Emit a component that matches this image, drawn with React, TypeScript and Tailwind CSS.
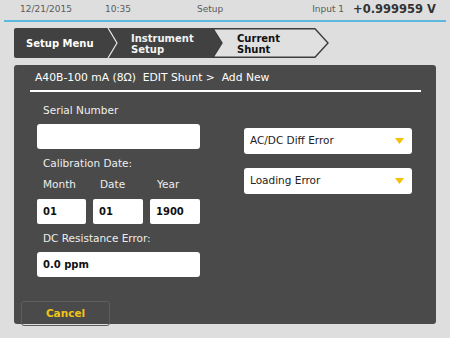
const font = { fontFamily: '"DejaVu Sans", Verdana, sans-serif' };

function Caret() {
  return (
    <svg width="9" height="6" viewBox="0 0 9 6">
      <path d="M0 0 H9 L4.5 6 Z" fill="#f2c200" />
    </svg>
  );
}

function Dropdown({ label }: { label: string }) {
  return (
    <div className="flex h-[26px] items-center justify-between rounded-[3px] bg-white pl-[6px] pr-[8px] text-[10.5px] text-[#222]">
      <span>{label}</span>
      <Caret />
    </div>
  );
}

function Breadcrumb() {
  return (
    <div className="relative ml-[14px] h-[30px] w-[316px]">
      <svg className="absolute inset-0" width="316" height="30" viewBox="0 0 316 30">
        <path d="M0 2 Q0 0 2 0 H94 L103 15 L94 30 H2 Q0 30 0 28 Z" fill="#414141" />
        <path d="M94 0 H199 L208 15 L199 30 H94 L103 15 Z" fill="#414141" />
        <path d="M94 0 L103 15 L94 30" fill="none" stroke="#e6e6e6" strokeWidth="1.2" />
        <path d="M199 0.7 H301 L314 15 L301 29.3 H199 L208 15 Z" fill="#e0e0e0" stroke="#3c3c3c" strokeWidth="1.4" />
      </svg>
      <div className="relative flex h-full items-center text-[10px] font-bold leading-[11px]">
        <div className="w-[117px] pl-[12px] text-white">Setup Menu</div>
        <div className="w-[106px] pt-[1px] text-[#f2f2f2]">
          Instrument
          <br />
          Setup
        </div>
        <div className="pt-[1px] text-[#111]">
          Current
          <br />
          Shunt
        </div>
      </div>
    </div>
  );
}

export default function App() {
  return (
    <div className="h-[338px] w-[450px] overflow-hidden bg-[#dedede]" style={font}>
      <div className="flex h-[20px] items-center px-[20px] text-[9px] text-[#5a5a5a]">
        <span className="w-[85px]">12/21/2015</span>
        <span className="w-[92px]">10:35</span>
        <span>Setup</span>
        <span className="ml-auto mr-[9px]">Input 1</span>
        <span className="mr-[-6px] text-[11.5px] font-bold text-[#333]">+0.999959 V</span>
      </div>
      <div className="mx-[4px] h-[2px] bg-[#5cb8dc]" />
      <div className="pt-[6px]">
        <Breadcrumb />
      </div>
      <div className="mx-[14px] mt-[7px] h-[259px] rounded-[3px] bg-[#4a4a4a] pt-[6px]">
        <div className="pl-[21px] text-[10.75px] leading-[14px] text-white">
          A40B-100 mA (8Ω)&nbsp;&nbsp;EDIT Shunt &gt;&nbsp;&nbsp;Add New
        </div>
        <div className="ml-[16px] mr-[15px] mt-[5px] h-[2px] bg-white" />
        <div className="flex">
          <div className="ml-[23px] w-[163px] text-[10.5px] text-[#eeeeee]">
            <div className="mt-[11px] pl-[6px] leading-[14px]">Serial Number</div>
            <div className="mt-[7px] h-[25px] rounded-[3px] bg-white" />
            <div className="mt-[7px] pl-[6px] leading-[14px]">Calibration Date:</div>
            <div className="mt-[7px] flex pl-[6px] leading-[14px]">
              <span className="w-[57px]">Month</span>
              <span className="w-[57px]">Date</span>
              <span>Year</span>
            </div>
            <div className="mt-[8px] flex gap-[7px] text-[10px] font-bold text-[#111]">
              <div className="flex h-[25px] w-[49px] items-center rounded-[2px] bg-white pl-[6px]">01</div>
              <div className="flex h-[25px] w-[50px] items-center rounded-[2px] bg-white pl-[6px]">01</div>
              <div className="flex h-[25px] w-[50px] items-center rounded-[2px] bg-white pl-[6px]">1900</div>
            </div>
            <div className="mt-[7px] pl-[6px] leading-[14px]">DC Resistance Error:</div>
            <div className="mt-[7px] flex h-[25px] items-center rounded-[3px] bg-white pl-[6px] text-[10px] font-bold text-[#111]">
              0.0 ppm
            </div>
          </div>
          <div className="ml-[44px] mt-[36px] flex w-[168px] flex-col gap-[14px]">
            <Dropdown label="AC/DC Diff Error" />
            <Dropdown label="Loading Error" />
          </div>
        </div>
        <div className="ml-[7px] mt-[24px] flex h-[25px] w-[89px] items-center justify-center rounded-[3px] border border-[#5e5e5e] text-[10.5px] font-bold text-[#f0c419]">
          Cancel
        </div>
      </div>
    </div>
  );
}
